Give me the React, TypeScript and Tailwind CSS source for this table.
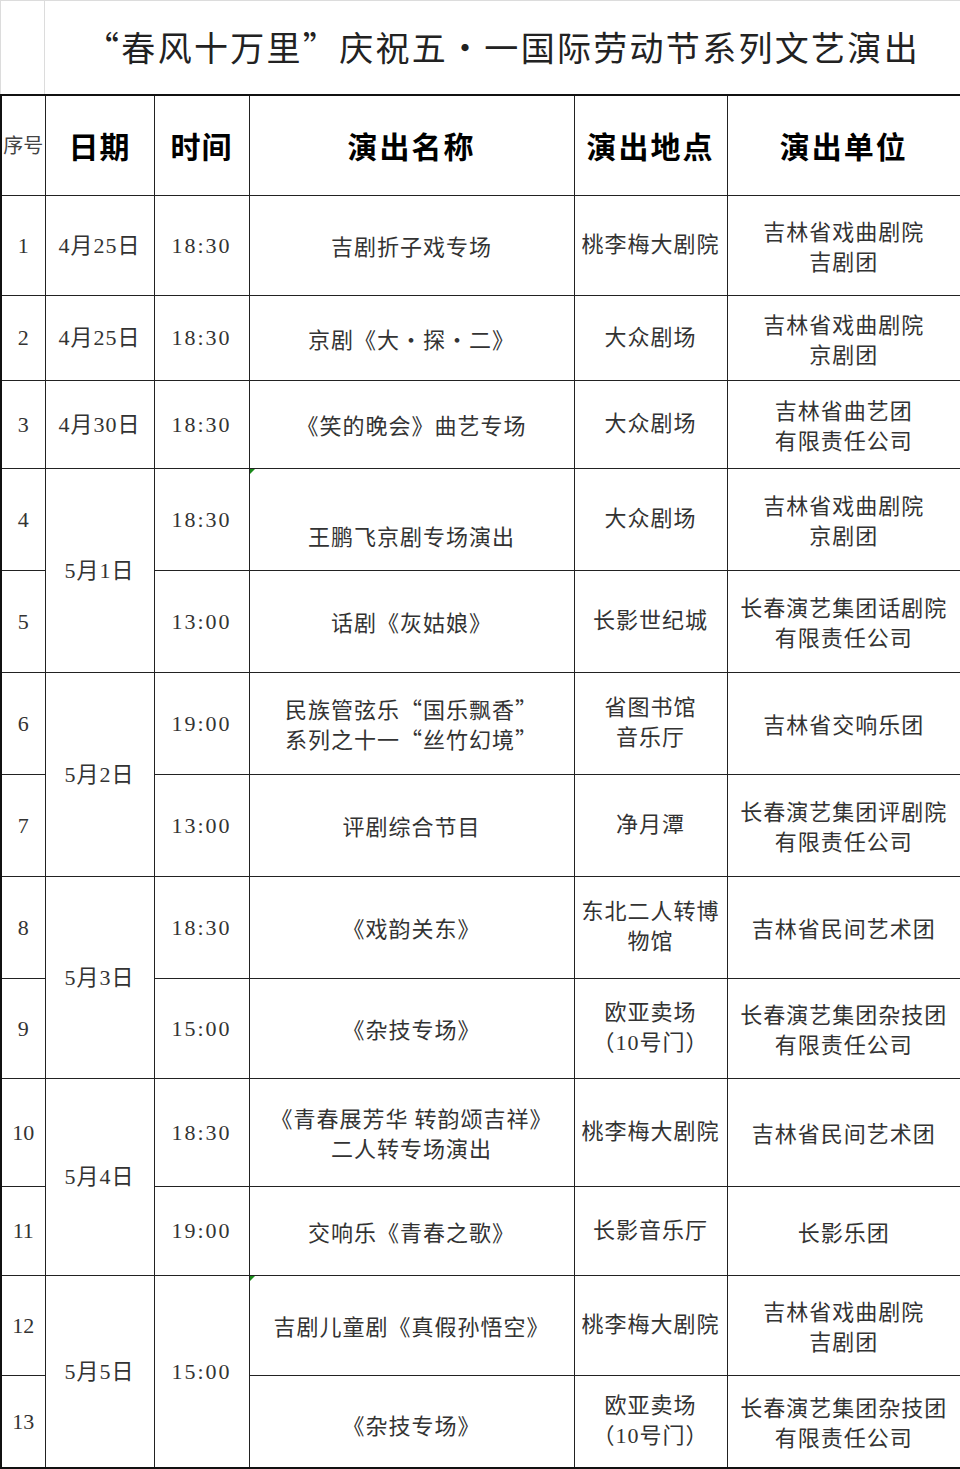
import React from "react";

const cjk = "font-['Noto_Sans_CJK_SC',sans-serif]";
const mixed = "font-['Liberation_Serif','Noto_Sans_CJK_SC',serif]";

type Row = {
  no: string;
  date?: { text: string; span: number };
  time?: { text: string; span: number };
  name: string[];
  place: string[];
  unit: string[];
  h: number;
  nameClass?: string;
  mark?: boolean;
};

const rows: Row[] = [
  { no: "1", date: { text: "4月25日", span: 1 }, time: { text: "18:30", span: 1 }, name: ["吉剧折子戏专场"], place: ["桃李梅大剧院"], unit: ["吉林省戏曲剧院", "吉剧团"], h: 100 },
  { no: "2", date: { text: "4月25日", span: 1 }, time: { text: "18:30", span: 1 }, name: ["京剧《大•探•二》"], place: ["大众剧场"], unit: ["吉林省戏曲剧院", "京剧团"], h: 85 },
  { no: "3", date: { text: "4月30日", span: 1 }, time: { text: "18:30", span: 1 }, name: ["《笑的晚会》曲艺专场"], place: ["大众剧场"], unit: ["吉林省曲艺团", "有限责任公司"], h: 88 },
  { no: "4", date: { text: "5月1日", span: 2 }, time: { text: "18:30", span: 1 }, name: ["王鹏飞京剧专场演出"], place: ["大众剧场"], unit: ["吉林省戏曲剧院", "京剧团"], h: 102, nameClass: "pt-[32px]", mark: true },
  { no: "5", time: { text: "13:00", span: 1 }, name: ["话剧《灰姑娘》"], place: ["长影世纪城"], unit: ["长春演艺集团话剧院", "有限责任公司"], h: 102 },
  { no: "6", date: { text: "5月2日", span: 2 }, time: { text: "19:00", span: 1 }, name: ["民族管弦乐“国乐飘香”", "系列之十一“丝竹幻境”"], place: ["省图书馆", "音乐厅"], unit: ["吉林省交响乐团"], h: 102 },
  { no: "7", time: { text: "13:00", span: 1 }, name: ["评剧综合节目"], place: ["净月潭"], unit: ["长春演艺集团评剧院", "有限责任公司"], h: 102 },
  { no: "8", date: { text: "5月3日", span: 2 }, time: { text: "18:30", span: 1 }, name: ["《戏韵关东》"], place: ["东北二人转博", "物馆"], unit: ["吉林省民间艺术团"], h: 102 },
  { no: "9", time: { text: "15:00", span: 1 }, name: ["《杂技专场》"], place: ["欧亚卖场", "（10号门）"], unit: ["长春演艺集团杂技团", "有限责任公司"], h: 100 },
  { no: "10", date: { text: "5月4日", span: 2 }, time: { text: "18:30", span: 1 }, name: ["《青春展芳华 转韵颂吉祥》", "二人转专场演出"], place: ["桃李梅大剧院"], unit: ["吉林省民间艺术团"], h: 108 },
  { no: "11", time: { text: "19:00", span: 1 }, name: ["交响乐《青春之歌》"], place: ["长影音乐厅"], unit: ["长影乐团"], h: 89 },
  { no: "12", date: { text: "5月5日", span: 2 }, time: { text: "15:00", span: 2 }, name: ["吉剧儿童剧《真假孙悟空》"], place: ["桃李梅大剧院"], unit: ["吉林省戏曲剧院", "吉剧团"], h: 100, mark: true },
  { no: "13", name: ["《杂技专场》"], place: ["欧亚卖场", "（10号门）"], unit: ["长春演艺集团杂技团", "有限责任公司"], h: 93, nameClass: "pt-[6px]" },
];

const td = "border border-[#222] text-center align-middle p-0 text-[#333]";

function Lines({ lines }: { lines: string[] }) {
  return (
    <div className="leading-[30px]">
      {lines.map((l) => (
        <div key={l} className="whitespace-nowrap">{l}</div>
      ))}
    </div>
  );
}

export default function App() {
  return (
    <div lang="zh-CN" className="w-[960px] h-[1469px] bg-white overflow-hidden">
      <div className="flex h-[94px] border-t border-l border-[#dcdcdc]">
        <div className="w-[44px] border-r border-[#dcdcdc]" />
        <div className={`flex-1 flex items-center justify-center pb-[2px] text-[34px] text-[#222] tracking-[2.3px] ${cjk}`}>
          “春风十万里”庆祝五•一国际劳动节系列文艺演出
        </div>
      </div>

      <table className="table-fixed border-collapse border-2 border-[#111] w-[960px]">
        <colgroup>
          <col className="w-[44px]" />
          <col className="w-[109px]" />
          <col className="w-[95px]" />
          <col className="w-[325px]" />
          <col className="w-[153px]" />
          <col className="w-[234px]" />
        </colgroup>
        <thead>
          <tr className="h-[100px]">
            <th className={`${td} text-[20px] font-normal text-[#444] tracking-[0px] ${cjk}`}>序号</th>
            <th className={`${td} text-[30px] font-bold text-black tracking-[1px] ${cjk}`}>日期</th>
            <th className={`${td} text-[30px] font-bold text-black tracking-[1px] ${cjk}`}>时间</th>
            <th className={`${td} text-[30px] font-bold text-black tracking-[2px] ${cjk}`}>演出名称</th>
            <th className={`${td} text-[30px] font-bold text-black tracking-[2px] ${cjk}`}>演出地点</th>
            <th className={`${td} text-[30px] font-bold text-black tracking-[2px] ${cjk}`}>演出单位</th>
          </tr>
        </thead>
        <tbody>
          {rows.map((r) => (
            <tr key={r.no} style={{ height: r.h }}>
              <td className={`${td} text-[22px] ${mixed}`}>{r.no}</td>
              {r.date && (
                <td rowSpan={r.date.span} className={`${td} text-[22px] tracking-[1px] ${mixed}`}>
                  {r.date.text}
                </td>
              )}
              {r.time && (
                <td rowSpan={r.time.span} className={`${td} text-[22px] tracking-[2px] ${mixed}`}>
                  {r.time.text}
                </td>
              )}
              <td className={`${td} relative text-[22px] tracking-[1px] ${cjk} ${r.nameClass ?? ""}`}>
                {r.mark && (
                  <span className="absolute left-0 top-0 w-0 h-0 border-t-[5px] border-r-[5px] border-t-[#1a8a1a] border-r-transparent" />
                )}
                <Lines lines={r.name} />
              </td>
              <td className={`${td} text-[22px] tracking-[1px] ${mixed}`}>
                <Lines lines={r.place} />
              </td>
              <td className={`${td} text-[22px] tracking-[1px] ${cjk}`}>
                <Lines lines={r.unit} />
              </td>
            </tr>
          ))}
        </tbody>
      </table>
    </div>
  );
}
